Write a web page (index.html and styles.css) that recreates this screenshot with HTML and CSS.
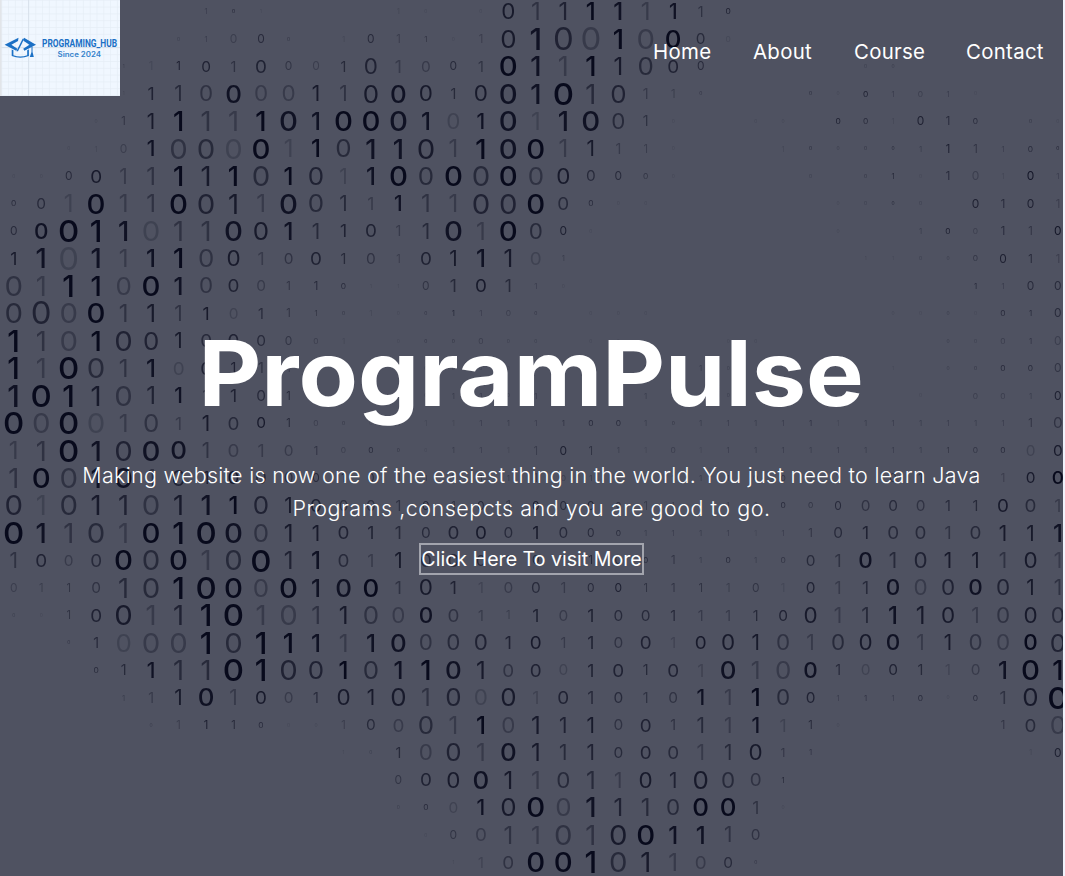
FILE: index.html
```html
<!DOCTYPE html>
<html lang="en">
<head>
<meta charset="utf-8">
<title>ProgramPulse</title>
<link rel="stylesheet" href="styles.css">
</head>
<body>
<div class="hero">
  <svg class="digits" id="digits" width="1063" height="876" aria-hidden="true"></svg>
  <header class="bar">
    <svg class="logo" width="120" height="96" viewBox="0 0 120 96">
      <defs>
        <pattern id="grid" width="6.8" height="6.8" patternUnits="userSpaceOnUse" x="1.3" y="-.2">
          <path d="M.5 0V6.8M0 .5H6.8" stroke="#e3ebf4" stroke-width=".6"/>
        </pattern>
      </defs>
      <rect width="120" height="96" fill="#f0f7ff"/>
      <rect width="120" height="96" fill="url(#grid)"/>
      <path d="M28.5 0V96M0 47.5H120" stroke="#d5dee8" stroke-width=".8"/>
      <rect width="1.6" height="96" fill="#e2e5e9"/>
      <g fill="#1b70c5">
        <path d="M18.500 37.800 4.600 44.700l11.600 6 1.200-2-6-4 6.600-3.700z"/>
        <path d="M24 37.800 36 44.700l-11.600 6-1.200-2 6.200-4-6-3.900z"/>
        <path d="M22.600 38.800h1.600L18 51.200h-1.600z"/>
        <path d="M11.700 49.500 13.400 50.300v4.900q7 2.400 13.800 0v-4.900l1.700-.8v6.500q-8.600 3.400-17.200 0z"/>
        <path d="M31.500 46.800h1v5.200l1.300 5h-4l1.700-5z"/>
      </g>
      <text class="logo-name" x="42" y="47" textLength="75" lengthAdjust="spacingAndGlyphs">PROGRAMING_HUB</text>
      <text class="logo-since" x="57.500" y="57" textLength="43.500" lengthAdjust="spacingAndGlyphs">Since 2024</text>
    </svg>
    <nav class="menu">
      <a class="home">Home</a><a class="about">About</a><a class="course">Course</a><a class="contact">Contact</a>
    </nav>
  </header>
  <main class="intro">
    <h1 class="title">ProgramPulse</h1>
    <p class="lead"><span class="line-one">Making website is now one of the easiest thing in the world. You just need to learn Java</span><br><span class="line-two">Programs ,consepcts and you are good to go.</span></p>
    <a class="more">Click Here To visit More</a>
  </main>
</div>
<script src="digits.js"></script>
</body>
</html>
```
FILE: styles.css
```css
body {
  margin: 0;
  background: #f1f2fb;
  font-family: Inter, "Open Sans", sans-serif;
  color: #fff;
  overflow: hidden;
}
.hero {
  position: relative;
  width: 1063px;
  height: 876px;
  background: #4f5261;
  overflow: hidden;
}
.digits {
  position: absolute;
  left: 0;
  top: 0;
  fill: #080a1c;
  font-family: Inter, sans-serif;
  text-anchor: middle;
  filter: blur(0.6px);
}
.bar {
  position: relative;
  display: flex;
  justify-content: space-between;
  height: 96px;
}
.logo {
  display: block;
}
.logo-name {
  font: 700 11px "Roboto", sans-serif;
  fill: #1b70c5;
}
.logo-since {
  font: 600 7px Inter, sans-serif;
  fill: #3482cc;
}
.menu {
  display: flex;
  gap: 42px;
  padding: 37px 18px 0 0;
  font-size: 20.4px;
  letter-spacing: 0.3px;
  line-height: 30px;
  white-space: nowrap;
}
.home { width: 58px; }
.about { width: 59px; }
.course { width: 70px; }
.contact { width: 79px; }
.intro {
  position: relative;
  display: flex;
  flex-direction: column;
  align-items: center;
  padding-top: 205px;
}
.title {
  margin: 0;
  font-size: 91px;
  font-weight: 700;
  line-height: 144px;
  white-space: nowrap;
  transform: scaleX(1.066);
}
.lead {
  margin: 14px 0 18px;
  font-size: 21.5px;
  font-weight: 300;
  letter-spacing: 0.29px;
  line-height: 33px;
  text-align: center;
  white-space: nowrap;
}
.line-two {
  letter-spacing: 0.52px;
}
.more {
  box-sizing: border-box;
  width: 225px;
  height: 32px;
  border: 2px solid #a2a4ad;
  font-size: 19.6px;
  line-height: 29px;
  text-align: center;
  white-space: nowrap;
}
```
FILE: digits.js
```js
// Each cell is digit, size (1-9), strength (1-9); "-" leaves the cell empty.
const rows = `
- - - - - - - 122 015 111 - - - - 121 011 - 011 067 174 176 179 178 173 168 144 025
- - - - - - 012 122 032 034 013 - 121 034 132 123 011 132 077 198 096 093 189 083 079 045 021
- - - - 112 131 135 046 144 056 033 032 145 066 153 043 034 144 089 188 183 189 177 075 056 034 - - - - - 012 012
- - - - 111 156 165 064 078 063 063 167 164 077 078 067 145 067 088 188 099 185 076 143 132 013 - - - 014 011 025 122 022 122 011
- - - 011 133 167 189 184 183 189 088 178 089 089 088 178 062 168 088 172 188 088 065 144 011 - - 011 011 - 025 024 121 035 134 024 - 013 011
- - 011 121 032 168 084 085 082 089 172 179 075 188 188 087 173 189 088 089 173 167 143 132 011 - - - 121 014 012 013 014 122 135 133 122 024 015
011 011 034 057 163 174 189 187 189 085 179 076 162 178 089 075 089 085 089 074 067 045 034 023 011 - - - - 012 - 013 124 011 134 032 121 036 122
024 045 172 089 173 174 089 086 187 173 088 075 165 153 168 174 173 086 086 089 055 024 011 011 - - - - - - 011 012 014 012 - 035 134 035 132
034 068 099 199 188 082 184 184 088 077 178 165 156 056 143 165 088 173 089 065 035 011 - - - - - - - - 011 - - 122 025 022 134 133 036
157 188 092 188 173 178 189 074 067 153 044 056 145 044 132 056 167 178 177 052 122 - - - - - - - - - - 111 111 012 012 023 035 134 132
084 183 199 189 073 089 178 064 056 043 133 134 024 111 111 033 155 057 155 122 011 - - - - - - - - - - - - - - 124 122 034 034
085 096 083 089 174 177 164 157 042 145 133 123 013 121 011 013 124 122 022 013 - 011 011 011 - - - - - - - - 011 011 012 011 024 124 034
199 184 083 189 086 076 167 055 056 045 033 022 121 - 011 013 013 022 012 012 - 011 011 - - - 011 011 - - - - - - 012 012 022 123 032
199 183 099 085 174 178 052 056 146 144 132 122 011 - 011 012 012 012 011 012 012 122 122 122 022 122 012 - - - - - 111 - 012 013 024 024 033
198 099 199 187 084 176 168 155 156 045 134 122 012 011 012 012 122 122 012 122 122 122 122 122 122 122 012 - - - - - - 011 - 022 022 122 035
099 083 099 082 173 074 153 167 055 047 134 022 013 011 121 121 121 122 122 122 123 024 024 122 013 122 122 122 122 123 121 122 122 122 122 122 122 133 044
173 184 099 188 086 088 078 164 053 153 043 133 022 024 013 011 122 122 121 132 035 133 122 121 022 121 122 122 122 122 122 122 122 122 123 023 024 042 047
184 089 084 188 088 174 066 156 057 055 044 034 134 034 132 122 132 123 122 132 022 122 122 122 122 122 122 022 023 122 132 122 033 134 132 133 132 047 059
086 182 085 187 186 084 187 188 179 076 167 056 044 044 144 034 133 034 143 035 034 034 024 132 122 122 122 122 024 023 034 044 045 044 145 145 057 055 153
099 188 184 085 183 089 199 099 088 074 177 167 056 156 155 045 056 057 045 157 045 034 024 122 122 122 122 121 122 133 045 156 055 055 154 055 167 167 178
164 056 043 055 089 085 089 183 085 099 176 178 055 153 167 055 055 045 144 034 144 134 034 024 133 122 024 122 023 045 154 068 165 066 167 167 164 067 163
032 132 133 044 185 085 199 099 089 073 089 178 078 079 154 067 156 142 043 045 143 034 035 133 133 133 132 033 131 046 153 155 068 063 066 068 066 167 164
012 011 133 056 087 183 186 199 099 183 083 174 177 074 063 068 054 143 132 156 043 156 045 045 145 143 143 145 046 067 163 165 178 177 067 163 064 067 065
- - 013 145 072 083 083 199 085 199 189 178 173 178 078 064 065 066 156 057 143 156 044 056 142 057 067 167 064 163 065 067 068 163 167 064 063 069 076
- - - 024 145 168 185 185 099 199 086 076 179 075 178 189 078 177 054 056 042 156 056 145 056 152 078 173 073 068 145 042 046 145 142 043 178 089 189
- - - - 122 143 167 078 163 057 043 145 067 167 077 174 076 062 077 152 056 155 045 144 044 168 163 179 065 046 122 123 122 024 011 024 154 077 099
- - - - - 012 132 135 134 024 011 011 132 045 053 075 173 179 063 177 166 167 044 056 144 165 163 168 152 134 011 - - - - - 133 055 073
- - - - - - - - - - - - 111 012 145 063 076 173 078 177 165 166 045 056 055 163 165 067 133 123 - - - - - - - 121 035
- - - - - - - - - - - - - - 033 056 067 078 177 173 065 175 163 067 166 077 065 054 124
- - - - - - - - - - - - - - 012 024 042 168 077 089 073 188 176 175 065 079 079 154 011
- - - - - - - - - - - - - - - 011 033 053 174 173 084 184 087 089 178 178 164 044
- - - - - - - - - - - - - - - - 111 142 054 089 089 199 085 187 173 053 045 013
`.trim().split("\n");

const PITCH_X = 27.48, PITCH_Y = 27.45;
const svg = document.getElementById("digits");
rows.forEach((row, r) => {
  row.trim().split(" ").forEach((cell, c) => {
    if (cell === "-") return;
    const size = Number(cell[1]), strength = Number(cell[2]);
    const height = size * 2.35 + 1;
    const x = 13.7 + c * PITCH_X, y = 11.4 + r * PITCH_Y + height / 2;
    const stretch = cell[0] === "0" ? 1.08 : 1;
    const boost = size < 4 ? 1.25 : 1;
    const t = document.createElementNS("http://www.w3.org/2000/svg", "text");
    t.setAttribute("transform", `translate(${x.toFixed(1)} ${y.toFixed(1)}) scale(${stretch} 1)`);
    t.setAttribute("font-size", (height / 0.727).toFixed(1));
    t.setAttribute("font-weight", strength > 7 ? 500 : 400);
    t.setAttribute("opacity", Math.min(1, strength * 0.11 * boost).toFixed(2));
    t.textContent = cell[0];
    svg.appendChild(t);
  });
});
```
